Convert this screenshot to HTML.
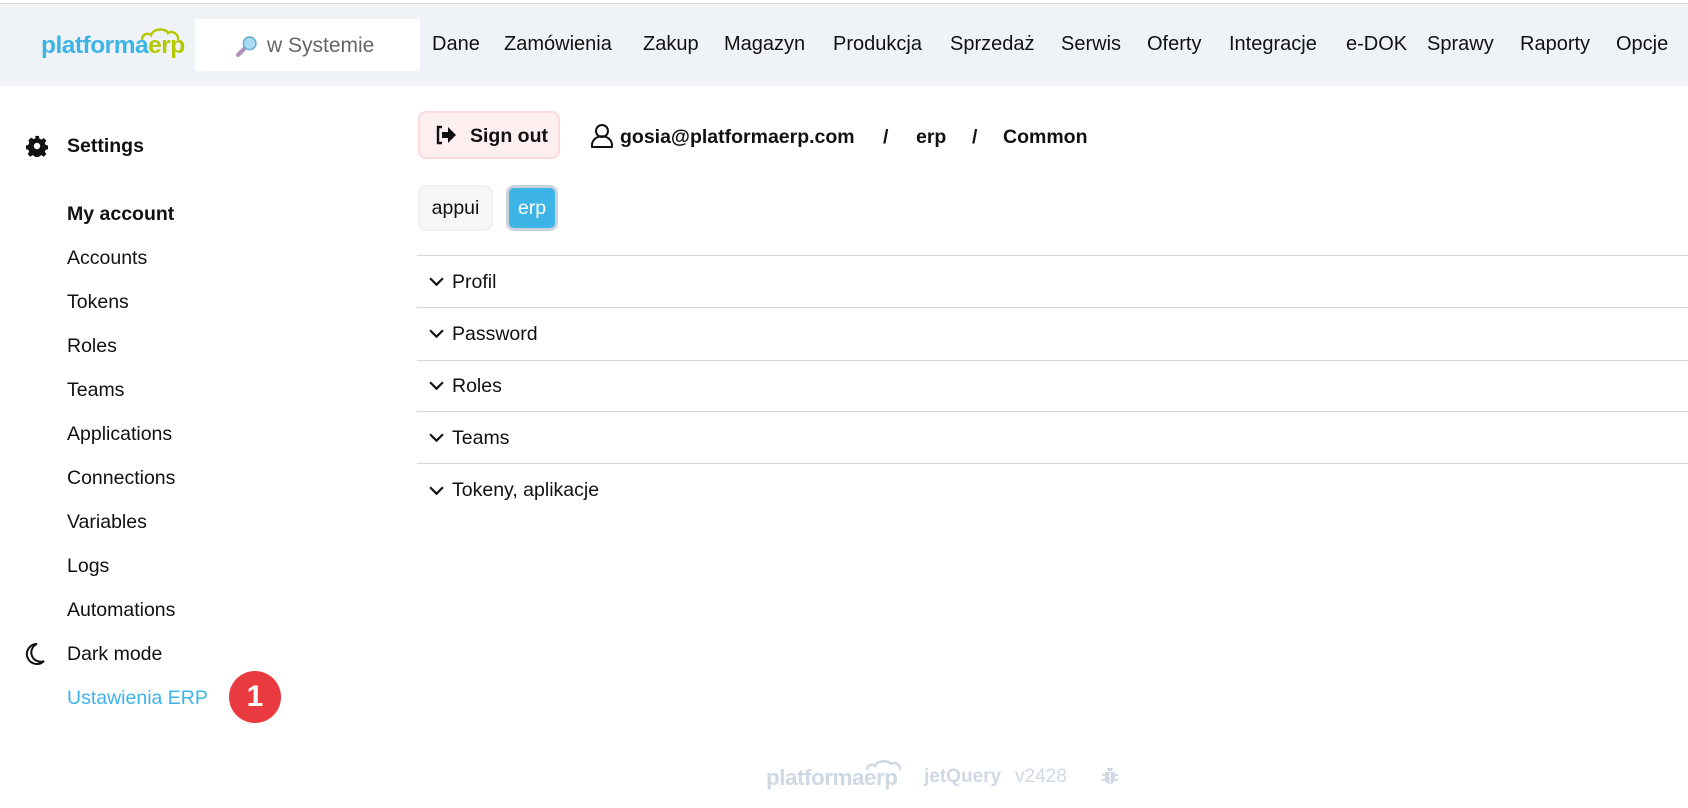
<!DOCTYPE html>
<html><head><meta charset="utf-8"><style>
*{margin:0;padding:0;box-sizing:border-box}
body{width:1688px;height:808px;overflow:hidden;background:#fff;font-family:"Liberation Sans",sans-serif;color:#111;position:relative}
.a{position:absolute;white-space:nowrap}
.hdr{position:absolute;left:0;top:3px;width:1688px;height:83px;background:#eff3f8;border-top:1px solid #ddd}
.nav{font-size:20px;top:33px}
.side{font-size:19.5px;left:67px}
.line{position:absolute;left:417px;right:0;height:1px;background:#cfd8e3}
.acc{font-size:19.5px;left:452px}
.chev{position:absolute;left:429px;width:15px;height:10px}
</style></head><body>
<div class="hdr"></div>
<div class="a" style="left:41px;top:32px;font-size:24.5px;font-weight:bold;letter-spacing:-0.5px"><span style="color:#3db4e6">platforma</span><span style="color:#b5c900">erp</span></div>
<svg class="a" style="left:140px;top:27px" width="40" height="14" viewBox="0 0 40 14"><path d="M2 13 C2 6 9 6 11 8 C13 1 26 1 28 6 C32 3 39 7 38 13" fill="none" stroke="#b5c900" stroke-width="2.5"/></svg>
<div class="a" style="left:195px;top:19px;width:225px;height:52px;background:#fff"></div>
<svg class="a" style="left:235px;top:35px" width="23" height="23" viewBox="0 0 22 22"><line x1="3" y1="19" x2="9" y2="13" stroke="#b08fb8" stroke-width="4" stroke-linecap="round"/><circle cx="14" cy="8" r="6" fill="#a8dcf2" stroke="#6aaed0" stroke-width="1.5"/></svg>
<div class="a" style="left:267px;top:34px;font-size:21px;color:#666">w Systemie</div>
<div class="a nav" style="left:432px">Dane</div>
<div class="a nav" style="left:504px">Zamówienia</div>
<div class="a nav" style="left:643px">Zakup</div>
<div class="a nav" style="left:724px">Magazyn</div>
<div class="a nav" style="left:833px">Produkcja</div>
<div class="a nav" style="left:950px">Sprzedaż</div>
<div class="a nav" style="left:1061px">Serwis</div>
<div class="a nav" style="left:1147px">Oferty</div>
<div class="a nav" style="left:1229px">Integracje</div>
<div class="a nav" style="left:1346px">e-DOK</div>
<div class="a nav" style="left:1427px">Sprawy</div>
<div class="a nav" style="left:1520px">Raporty</div>
<div class="a nav" style="left:1616px">Opcje</div>

<svg class="a" style="left:26px;top:135px" width="22" height="22" viewBox="0 0 24 24"><path fill="#111" d="M10 1h4l.6 3 2.2 1 2.6-1.7 2.8 2.8-1.7 2.6 1 2.2 3 .6v4l-3 .6-1 2.2 1.7 2.6-2.8 2.8-2.6-1.7-2.2 1-.6 3h-4l-.6-3-2.2-1-2.6 1.7-2.8-2.8 1.7-2.6-1-2.2-3-.6v-4l3-.6 1-2.2L2.8 5.6l2.8-2.8 2.6 1.7 2.2-1zM12 8.5a3.5 3.5 0 100 7 3.5 3.5 0 000-7z"/></svg>
<div class="a" style="left:67px;top:135px;font-size:19.5px;font-weight:bold">Settings</div>
<div class="a side" style="top:203px;font-weight:bold">My account</div>
<div class="a side" style="top:247px">Accounts</div>
<div class="a side" style="top:291px">Tokens</div>
<div class="a side" style="top:335px">Roles</div>
<div class="a side" style="top:379px">Teams</div>
<div class="a side" style="top:423px">Applications</div>
<div class="a side" style="top:467px">Connections</div>
<div class="a side" style="top:511px">Variables</div>
<div class="a side" style="top:555px">Logs</div>
<div class="a side" style="top:599px">Automations</div>
<svg class="a" style="left:24px;top:642px" width="22" height="24" viewBox="0 0 22 24"><path d="M13 2 A10 10 0 1 0 20 19 A9 9 0 0 1 13 2Z" fill="none" stroke="#111" stroke-width="2"/></svg>
<div class="a side" style="top:643px">Dark mode</div>
<div class="a side" style="top:687px;color:#3db4e6">Ustawienia ERP</div>
<div class="a" style="left:229px;top:671px;width:52px;height:52px;border-radius:50%;background:#e83a3f;color:#fff;font-size:30px;font-weight:bold;text-align:center;line-height:52px">1</div>

<div class="a" style="left:418px;top:111px;width:142px;height:48px;background:#fdeef0;border:2px solid #fadadd;border-radius:8px"></div>
<svg class="a" style="left:434px;top:125px" width="24" height="20" viewBox="0 0 22 20"><path d="M7 2H3v16h4" fill="none" stroke="#111" stroke-width="2.4"/><path d="M7 7h6V2l8 8-8 8v-5H7z" fill="#111"/></svg>
<div class="a" style="left:470px;top:125px;font-size:19.5px;font-weight:bold">Sign out</div>
<svg class="a" style="left:590px;top:123px" width="24" height="26" viewBox="0 0 24 26"><circle cx="12" cy="8" r="6" fill="none" stroke="#111" stroke-width="2"/><path d="M2 24v-2a8 7 0 0 1 20 0v2z" fill="none" stroke="#111" stroke-width="2" stroke-linejoin="round"/></svg>
<div class="a" style="left:620px;top:126px;font-size:19.5px;font-weight:bold">gosia@platformaerp.com</div>
<div class="a" style="left:883px;top:126px;font-size:19.5px;font-weight:bold">/</div>
<div class="a" style="left:916px;top:126px;font-size:19.5px;font-weight:bold">erp</div>
<div class="a" style="left:972px;top:126px;font-size:19.5px;font-weight:bold">/</div>
<div class="a" style="left:1003px;top:126px;font-size:19.5px;font-weight:bold">Common</div>

<div class="a" style="left:418px;top:185px;width:75px;height:46px;background:#f5f6f8;border:2px solid #eef0f3;border-radius:8px;font-size:19.5px;text-align:center;line-height:42px">appui</div>
<div class="a" style="left:506px;top:185px;width:52px;height:46px;background:#3db4e6;border:3px solid #c9d2de;border-radius:8px;font-size:19.5px;color:#fff;text-align:center;line-height:40px">erp</div>

<div class="line" style="top:255px"></div>
<div class="line" style="top:307px"></div>
<div class="line" style="top:360px"></div>
<div class="line" style="top:411px"></div>
<div class="line" style="top:463px"></div>
<svg class="chev" style="top:277px" viewBox="0 0 14 9"><path d="M1 1l6 6 6-6" fill="none" stroke="#111" stroke-width="2"/></svg>
<svg class="chev" style="top:329px" viewBox="0 0 14 9"><path d="M1 1l6 6 6-6" fill="none" stroke="#111" stroke-width="2"/></svg>
<svg class="chev" style="top:381px" viewBox="0 0 14 9"><path d="M1 1l6 6 6-6" fill="none" stroke="#111" stroke-width="2"/></svg>
<svg class="chev" style="top:433px" viewBox="0 0 14 9"><path d="M1 1l6 6 6-6" fill="none" stroke="#111" stroke-width="2"/></svg>
<svg class="chev" style="top:486px" viewBox="0 0 14 9"><path d="M1 1l6 6 6-6" fill="none" stroke="#111" stroke-width="2"/></svg>
<div class="a acc" style="top:271px">Profil</div>
<div class="a acc" style="top:323px">Password</div>
<div class="a acc" style="top:375px">Roles</div>
<div class="a acc" style="top:427px">Teams</div>
<div class="a acc" style="top:479px">Tokeny, aplikacje</div>

<div class="a" style="left:766px;top:765px;font-size:22.5px;font-weight:bold;color:#cfd8e3;letter-spacing:-0.5px">platformaerp</div>
<svg class="a" style="left:864px;top:759px" width="40" height="12" viewBox="0 0 38 12"><path d="M2 11 C2 5 8 5 10 7 C12 1 24 1 26 5 C30 2 36 6 35 11" fill="none" stroke="#cfd8e3" stroke-width="2.5"/></svg>
<div class="a" style="left:924px;top:766px;font-size:19px;font-weight:bold;color:#cfd8e3">jetQuery</div>
<div class="a" style="left:1015px;top:766px;font-size:19px;color:#cfd8e3">v2428</div>
<svg class="a" style="left:1102px;top:767px" width="16" height="17" viewBox="0 0 16 17"><path fill="#cfd8e3" d="M5 1h6l-1 3H6zM3 5h10v7a5 5 0 0 1-10 0zM0 7h3v2H0zM13 7h3v2h-3zM0 12h3v2H0zM13 12h3v2h-3z"/><rect x="7.3" y="6" width="1.4" height="10" fill="#fff"/></svg>
</body></html>
